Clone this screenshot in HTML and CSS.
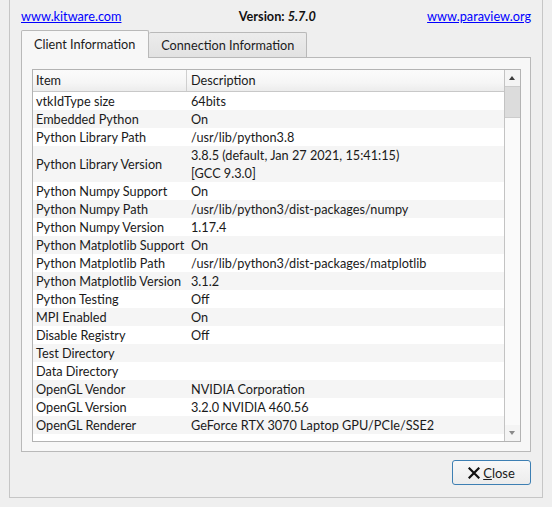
FILE: index.html
```html
<!DOCTYPE html>
<html lang="en">
<head>
  <meta charset="UTF-8">
  <title>About ParaView</title>
  <link rel="stylesheet" href="styles.css">
</head>
<body>
  <div class="dialog">
    <!-- Header links and version -->
    <div class="top-row">
      <a class="link" href="#">www.kitware.com</a>
      <div class="version">Version: <i>5.7.0</i></div>
      <a class="link" href="#">www.paraview.org</a>
    </div>

    <!-- Tab widget -->
    <div class="tabs">
      <div class="tab active">Client Information</div>
      <div class="tab">Connection Information</div>
    </div>
    <div class="pane">
      <div class="tree">
        <div class="tree-body">
          <div class="tree-head">
            <div class="col-item">Item</div>
            <div class="col-desc">Description</div>
          </div>
          <div class="rows" id="rows"></div>
        </div>
        <div class="scrollbar">
          <div class="arrow up"></div>
          <div class="thumb"></div>
          <div class="track"></div>
          <div class="arrow down"></div>
        </div>
      </div>
    </div>

    <div class="buttons">
      <button class="btn">
        <svg viewBox="0 0 12 12" width="12" height="12"><path d="M1.5,1.5 L10.5,10.5 M10.5,1.5 L1.5,10.5" stroke="#111" stroke-width="2.2" stroke-linecap="square"/></svg>
        <span><u>C</u>lose</span>
      </button>
    </div>
  </div>

  <script>
    // Client information entries
    const info = [
      ['vtkIdType size', '64bits'],
      ['Embedded Python', 'On'],
      ['Python Library Path', '/usr/lib/python3.8'],
      ['Python Library Version', '3.8.5 (default, Jan 27 2021, 15:41:15)<br>[GCC 9.3.0]'],
      ['Python Numpy Support', 'On'],
      ['Python Numpy Path', '/usr/lib/python3/dist-packages/numpy'],
      ['Python Numpy Version', '1.17.4'],
      ['Python Matplotlib Support', 'On'],
      ['Python Matplotlib Path', '/usr/lib/python3/dist-packages/matplotlib'],
      ['Python Matplotlib Version', '3.1.2'],
      ['Python Testing', 'Off'],
      ['MPI Enabled', 'On'],
      ['Disable Registry', 'Off'],
      ['Test Directory', ''],
      ['Data Directory', ''],
      ['OpenGL Vendor', 'NVIDIA Corporation'],
      ['OpenGL Version', '3.2.0 NVIDIA 460.56'],
      ['OpenGL Renderer', 'GeForce RTX 3070 Laptop GPU/PCIe/SSE2']
    ];

    const rows = document.getElementById('rows');
    info.forEach(function (entry) {
      const row = document.createElement('div');
      row.className = 'row';
      row.innerHTML = '<div class="col-item">' + entry[0] + '</div><div class="col-desc">' + entry[1] + '</div>';
      rows.appendChild(row);
    });
  </script>
</body>
</html>
```

FILE: styles.css
```css
* {
  margin: 0;
  padding: 0;
  box-sizing: border-box;
}
body {
  background: #efefef;
  font-family: Lato, "Noto Sans", sans-serif;
  font-size: 12.7px;
  color: #1a1a1a;
  width: 552px;
  height: 507px;
  overflow: hidden;
}

/* Outer frame (top edge is out of view) */
.dialog {
  margin-left: 9px;
  width: 534px;
  height: 498px;
  border: 1px solid #c6c6c6;
  border-top: none;
  padding: 0 11px 0 11px;
}

.top-row {
  display: flex;
  justify-content: space-between;
  align-items: center;
  height: 30px;
  padding-top: 1px;
}
.link {
  color: #0000ff;
  text-decoration: underline;
}
.version {
  font-weight: bold;
  color: #111;
  margin-left: 6px;
}

/* Tabs */
.tabs {
  display: flex;
  align-items: flex-end;
  height: 27px;
}
.tab {
  height: 25px;
  padding: 0 12px;
  line-height: 25px;
  white-space: nowrap;
  border: 1px solid #b9b9b9;
  border-bottom: none;
  border-left: none;
  border-radius: 2px 2px 0 0;
  background: linear-gradient(#ececec, #e2e2e2);
  color: #1c1c1c;
}
.tab.active {
  height: 28px;
  line-height: 27px;
  margin-bottom: -1px;
  border-left: 1px solid #b9b9b9;
  background: #f7f7f7;
  position: relative;
  z-index: 1;
  padding: 0 13px 0 12px;
}
.pane {
  height: 395px;
  width: 510px;
  border: 1px solid #b9b9b9;
  background: #f7f7f7;
  padding: 11px 9px 10px 10px;
}

/* Tree view */
.tree {
  display: flex;
  height: 373px;
  border: 1px solid #b3b3b3;
  background: #ffffff;
}
.tree-body {
  flex: 1;
  overflow: hidden;
}
.tree-head {
  display: flex;
  height: 22px;
  line-height: 21px;
  border-bottom: 1px solid #c8c8c8;
  background: linear-gradient(#fbfbfb, #f6f6f6 60%, #ececec);
}
.tree-head .col-item {
  border-right: 1px solid #cfcfcf;
}
.row {
  display: flex;
  line-height: 18px;
}
.row:nth-child(even) {
  background: #f5f5f5;
}
.col-item {
  width: 154px;
  padding-left: 3px;
  flex-shrink: 0;
  display: flex;
  align-items: center;
  white-space: nowrap;
}
.col-desc {
  padding-left: 4px;
  white-space: nowrap;
}

/* Scrollbar */
.scrollbar {
  width: 16px;
  border-left: 1px solid #c3c3c3;
  background: #fafafa;
  display: flex;
  flex-direction: column;
}
.arrow {
  height: 16px;
  position: relative;
  background: #f4f4f4;
}
.arrow::after {
  content: '';
  position: absolute;
  left: 4px;
  top: 6px;
  border-left: 3.5px solid transparent;
  border-right: 3.5px solid transparent;
}
.arrow.up::after {
  border-bottom: 4px solid #3c3c3c;
}
.arrow.down::after {
  border-top: 4px solid #8a8a8a;
}
.thumb {
  height: 32px;
  background: #dcdcdc;
  border-top: 1px solid #cccccc;
  border-bottom: 1px solid #cccccc;
}
.track {
  flex: 1;
}

/* Bottom buttons */
.buttons {
  display: flex;
  justify-content: flex-end;
  padding-top: 8px;
}
.btn {
  width: 79px;
  height: 25px;
  border: 1px solid #3d7fb3;
  border-radius: 3px;
  background: linear-gradient(#f8f8f8, #ececec);
  font-family: inherit;
  font-size: 13px;
  color: #1a1a1a;
  display: flex;
  align-items: center;
  justify-content: center;
  gap: 3px;
}
```
